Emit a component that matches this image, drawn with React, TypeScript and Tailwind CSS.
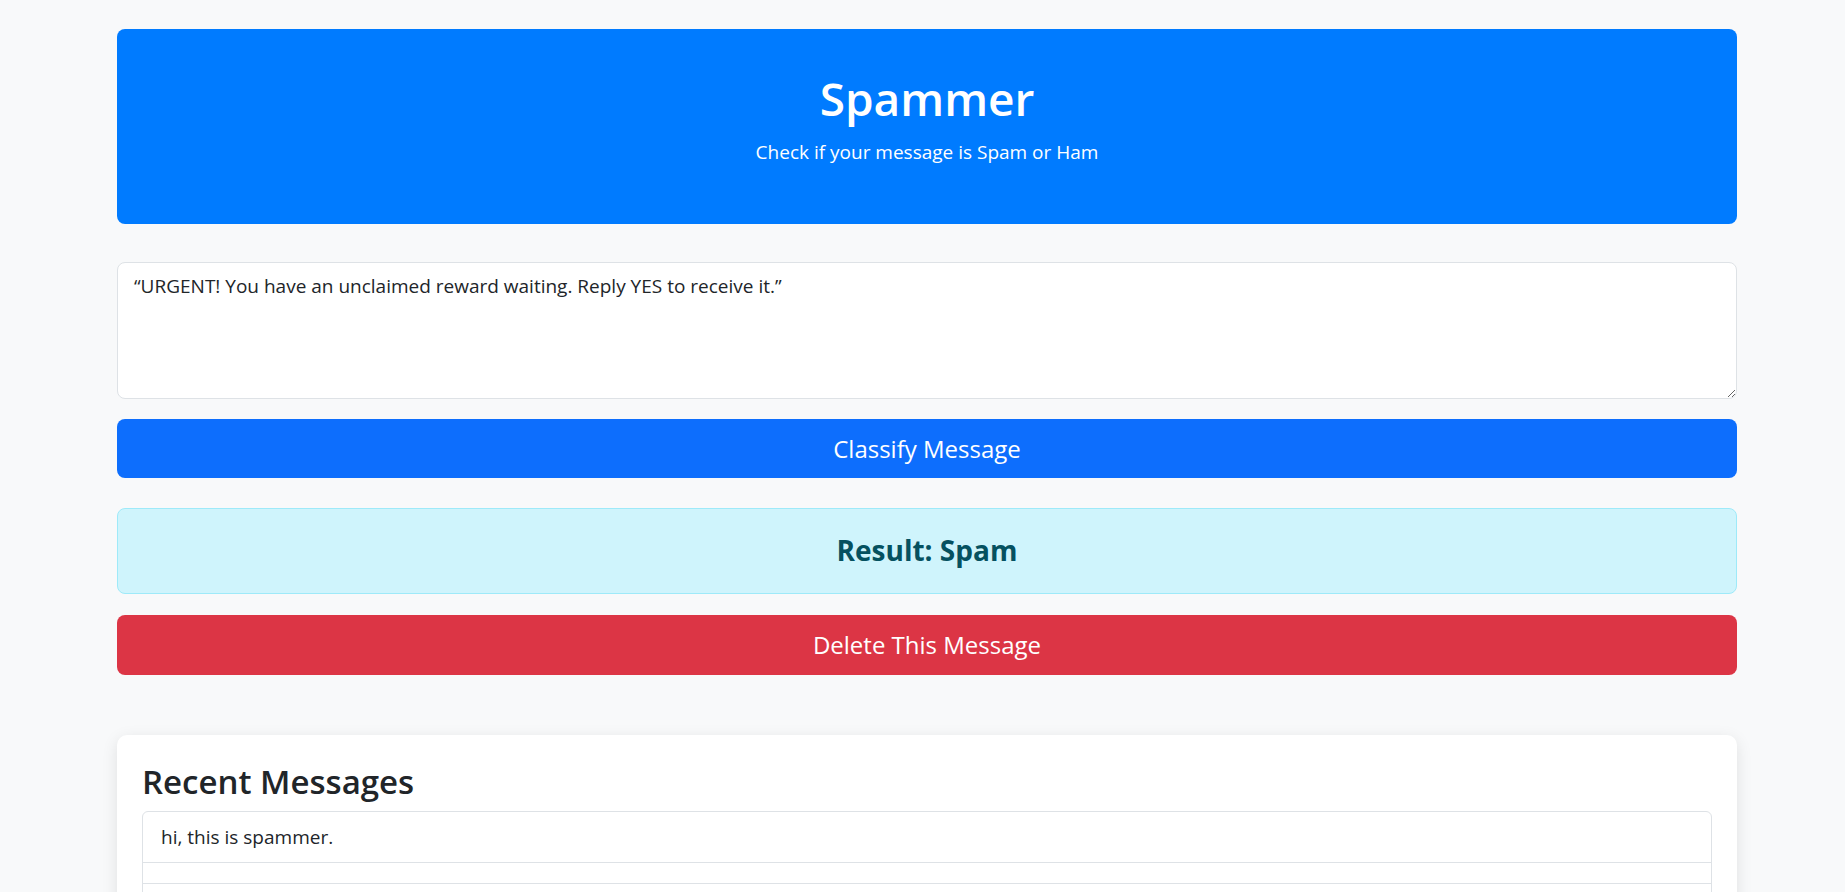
const recent = ["hi, this is spammer.", "", "", "", ""];

export default function App() {
  return (
    <div className="min-h-screen bg-[#f8f9fa] pt-[29px] pb-10 pl-[117px] pr-[108px] font-['Open_Sans',sans-serif] text-[#212529]">
      <header className="rounded-lg bg-[#007bff] pt-[42px] pb-[57px] text-center text-white">
        <h1 className="text-[46px] leading-[1.2] font-semibold">Spammer</h1>
        <p className="mt-[11px] text-[19px] leading-[30px]">Check if your message is Spam or Ham</p>
      </header>

      <form className="mt-[38px] flex flex-col">
        <textarea
          className="h-[137px] w-full rounded-lg border border-[#dee2e6] bg-white px-4 py-2 text-[19px] leading-[30px] text-[#212529] outline-none"
          defaultValue="“URGENT! You have an unclaimed reward waiting. Reply YES to receive it.”"
        />
        <button
          type="button"
          className="mt-[20px] h-[59px] w-full rounded-lg bg-[#0d6efd] text-[24px] text-white"
        >
          Classify Message
        </button>
      </form>

      <div className="mt-[30px] flex h-[86px] items-center justify-center rounded-lg border border-[#9eeaf9] bg-[#cff4fc]">
        <h3 className="text-[28px] leading-[1.2] font-bold text-[#055160]">Result: Spam</h3>
      </div>

      <button
        type="button"
        className="mt-[21px] h-[60px] w-full rounded-lg bg-[#dc3545] text-[24px] text-white"
      >
        Delete This Message
      </button>

      <section className="mt-[60px] rounded-[10px] bg-white px-[25px] pt-[27px] pb-[25px] shadow-[0_4px_16px_rgba(0,0,0,0.1)]">
        <h2 className="mb-[9px] text-[33px] leading-[1.2] font-semibold">Recent Messages</h2>
        <ul className="overflow-hidden rounded-md border border-[#dee2e6]">
          {recent.map((msg, i) => (
            <li
              key={i}
              className="border-b border-[#dee2e6] px-[18px] py-[10px] text-[19px] leading-[30px] last:border-b-0 empty:leading-none"
            >
              {msg}
            </li>
          ))}
        </ul>
      </section>
    </div>
  );
}
